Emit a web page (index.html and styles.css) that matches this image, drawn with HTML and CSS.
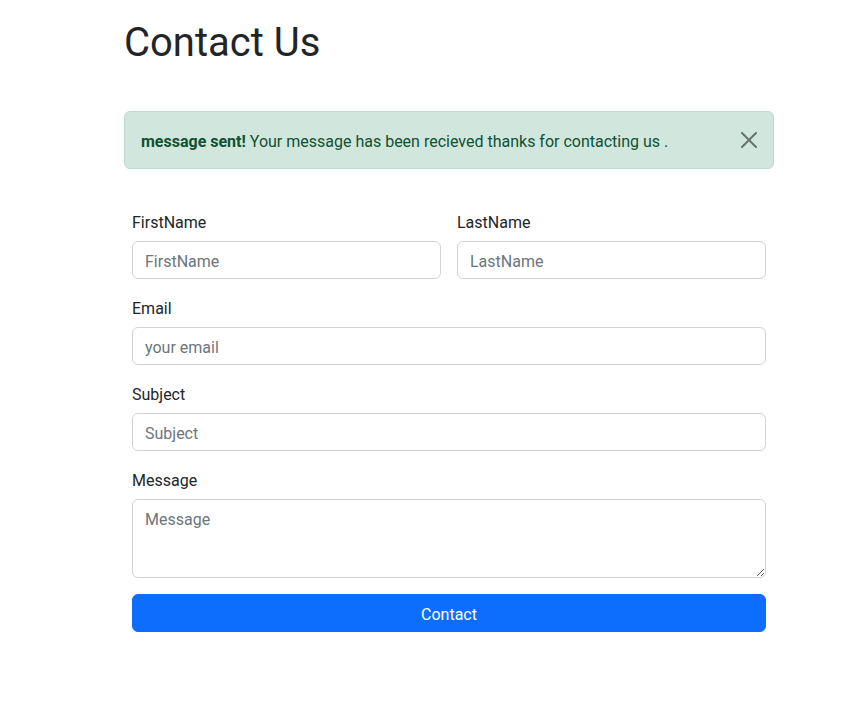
FILE: index.html
```html
<!DOCTYPE html>
<html lang="en">
<head>
<meta charset="utf-8">
<title>Contact Us</title>
<link rel="stylesheet" href="styles.css">
</head>
<body>
<main class="page">
  <h1 class="title">Contact Us</h1>
  <div class="alert">
    <span><strong>message sent!</strong> Your message has been recieved thanks for contacting us .</span>
    <button class="btn-close" type="button" aria-label="Close">
      <svg viewBox="0 0 16 16" width="16" height="16"><path d="M.293.293a1 1 0 0 1 1.414 0L8 6.586 14.293.293a1 1 0 1 1 1.414 1.414L9.414 8l6.293 6.293a1 1 0 0 1-1.414 1.414L8 9.414l-6.293 6.293a1 1 0 0 1-1.414-1.414L6.586 8 .293 1.707a1 1 0 0 1 0-1.414z"/></svg>
    </button>
  </div>
  <form class="form">
    <div class="row">
      <div class="field">
        <label class="label" for="fn">FirstName</label>
        <input class="control" id="fn" type="text" placeholder="FirstName">
      </div>
      <div class="field">
        <label class="label" for="ln">LastName</label>
        <input class="control" id="ln" type="text" placeholder="LastName">
      </div>
    </div>
    <div class="field">
      <label class="label" for="em">Email</label>
      <input class="control" id="em" type="email" placeholder="your email">
    </div>
    <div class="field">
      <label class="label" for="sj">Subject</label>
      <input class="control" id="sj" type="text" placeholder="Subject">
    </div>
    <div class="field">
      <label class="label" for="msg">Message</label>
      <textarea class="control area" id="msg" placeholder="Message"></textarea>
    </div>
    <button class="btn" type="button">Contact</button>
  </form>
</main>
</body>
</html>
```
FILE: styles.css
```css
* { box-sizing: border-box; }
html, body { margin: 0; padding: 0; background: #fff; }
body {
  font-family: "Roboto", "Liberation Sans", sans-serif;
  font-size: 16px;
  line-height: 24px;
  color: #212529;
}
.page {
  width: 650px;
  margin-left: 124px;
  padding-top: 19px;
}
.title {
  margin: 0 0 44px 0;
  font-size: 40px;
  line-height: 48px;
  font-weight: 400;
  color: #212529;
}
.alert {
  position: relative;
  background: #d1e7dd;
  border: 1px solid #badbcc;
  color: #0f5132;
  border-radius: 6px;
  padding: 18px 48px 14px 16px;
  margin-bottom: 40px;
}
.alert strong { font-weight: 700; }
.btn-close {
  position: absolute;
  top: 0;
  right: 0;
  padding: 20px 16px;
  width: 48px;
  height: 56px;
  border: 0;
  background: transparent;
  opacity: 0.5;
  display: flex;
  align-items: center;
  justify-content: center;
  cursor: pointer;
}
.btn-close svg { display: block; fill: #000; }
.form {
  padding: 0 8px;
  display: flex;
  flex-direction: column;
}
.row {
  display: grid;
  grid-template-columns: 1fr 1fr;
  column-gap: 16px;
}
.field {
  display: flex;
  flex-direction: column;
  margin-bottom: 16px;
}
.label {
  margin-bottom: 6px;
  padding-top: 2px;
  font-size: 16px;
  line-height: 24px;
}
.control {
  font-family: inherit;
  font-size: 16px;
  line-height: 24px;
  height: 38px;
  padding: 7px 12px 5px;
  border: 1px solid #ced4da;
  border-radius: 6px;
  color: #212529;
  background: #fff;
  width: 100%;
}
.control::placeholder { color: #6c757d; opacity: 1; }
.area {
  height: 79px;
  padding: 8px 12px 4px;
  resize: vertical;
}
.btn {
  font-family: inherit;
  font-size: 16px;
  line-height: 24px;
  height: 38px;
  padding: 8px 12px 4px;
  border: 1px solid #0d6efd;
  background: #0d6efd;
  color: #fff;
  border-radius: 6px;
  width: 100%;
}
```
